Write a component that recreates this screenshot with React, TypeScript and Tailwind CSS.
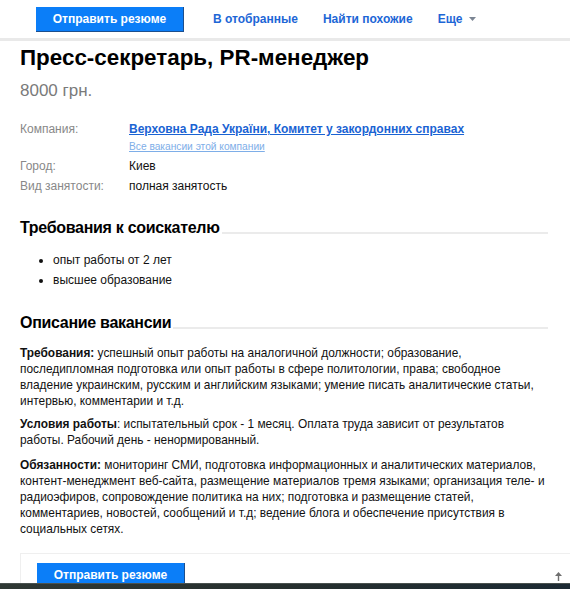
import React from "react";

const font = { fontFamily: '"Liberation Sans", Arial, Helvetica, sans-serif' };

function SendButton() {
  return (
    <button className="w-[148px] h-[25px] bg-[#0b7ef8] border-b border-r border-[#1c4f8e] text-white font-bold text-[12px] leading-none">
      Отправить резюме
    </button>
  );
}

function SectionHeading({ children }: { children: React.ReactNode }) {
  return (
    <div className="flex items-end">
      <h2 className="text-[16px] font-bold text-black leading-[20px] tracking-[-0.3px] whitespace-nowrap">{children}</h2>
      <div className="flex-1 h-[2px] bg-[#ebebeb] mb-[4px] ml-[2px]" />
    </div>
  );
}

export default function App() {
  return (
    <div style={font} className="relative w-[570px] h-[589px] overflow-hidden bg-white text-[#111]">
      <header className="h-[41px] flex items-center border-b-[3px] border-[#e9e9e9]">
        <div className="ml-[36px]">
          <SendButton />
        </div>
        <nav className="flex items-center ml-[29px] gap-[25px] text-[12px] font-bold text-[#1d66d6]">
          <a>В отобранные</a>
          <a>Найти похожие</a>
          <a className="flex items-center gap-[7px]">
            Еще
            <svg width="7" height="4" viewBox="0 0 7 4">
              <path d="M0 0 L7 0 L3.5 4 Z" fill="#7b8593" />
            </svg>
          </a>
        </nav>
      </header>

      <main className="px-[20px]">
        <h1 className="text-[22.4px] font-bold text-black leading-[28px] mt-[3px]">
          Пресс-секретарь, PR-менеджер
        </h1>
        <div className="text-[17px] text-[#7a7a7a] leading-[20px] mt-[9px]">8000 грн.</div>

        <div className="mt-[20px] text-[12px] leading-[17px]">
          <div className="flex">
            <div className="w-[109px] text-[#888]">Компания:</div>
            <div>
              <a className="text-[12px] font-bold text-[#1a63d3] underline">
                Верховна Рада України, Комитет у закордонних справах
              </a>
              <div className="text-[10.2px] text-[#7eaee8] underline">Все вакансии этой компании</div>
            </div>
          </div>
          <div className="flex mt-[3px]">
            <div className="w-[109px] text-[#888]">Город:</div>
            <div className="text-[#111]">Киев</div>
          </div>
          <div className="flex mt-[3px]">
            <div className="w-[109px] text-[#888]">Вид занятости:</div>
            <div className="text-[#111]">полная занятость</div>
          </div>
        </div>

        <div className="mt-[23px] w-[528px]">
          <SectionHeading>Требования к соискателю</SectionHeading>
          <ul className="list-disc pl-[33px] mt-[12px] text-[12px] leading-[20px]">
            <li>опыт работы от 2 лет</li>
            <li>высшее образование</li>
          </ul>
        </div>

        <div className="mt-[23px]">
          <div className="w-[528px]">
            <SectionHeading>Описание вакансии</SectionHeading>
          </div>
          <div className="mt-[12px] text-[11.9px] leading-[16px] text-[#111] whitespace-nowrap">
            <p className="mb-[7px]">
              <b>Требования:</b> успешный опыт работы на аналогичной должности; образование,
              <br />
              последипломная подготовка или опыт работы в сфере политологии, права; свободное
              <br />
              владение украинским, русским и английским языками; умение писать аналитические статьи,
              <br />
              интервью, комментарии и т.д.
            </p>
            <p className="mb-[9px]">
              <b>Условия работы</b>: испытательный срок - 1 месяц. Оплата труда зависит от результатов
              <br />
              работы. Рабочий день - ненормированный.
            </p>
            <p>
              <b>Обязанности:</b> мониторинг СМИ, подготовка информационных и аналитических материалов,
              <br />
              контент-менеджмент веб-сайта, размещение материалов тремя языками; организация теле- и
              <br />
              радиоэфиров, сопровождение политика на них; подготовка и размещение статей,
              <br />
              комментариев, новостей, сообщений и т.д; ведение блога и обеспечение присутствия в
              <br />
              социальных сетях.
            </p>
          </div>
        </div>
      </main>

      <div className="ml-[20px] mt-[16px] border-t border-l border-[#efefef] pl-[16px] pt-[9px] flex items-start">
        <SendButton />
        <svg className="ml-auto mr-[8px] mt-[9px]" width="7" height="9" viewBox="0 0 7 9">
          <path d="M3.5 0 L7 4 L4.2 4 L4.2 9 L2.8 9 L2.8 4 L0 4 Z" fill="#6f6f6f" />
        </svg>
      </div>

      <div className="absolute left-0 right-0 bottom-0 h-[6px] bg-gradient-to-r from-[#2f3834] via-[#262f2e] to-[#1c2a33] border-t border-[#4a524f]" />
    </div>
  );
}
